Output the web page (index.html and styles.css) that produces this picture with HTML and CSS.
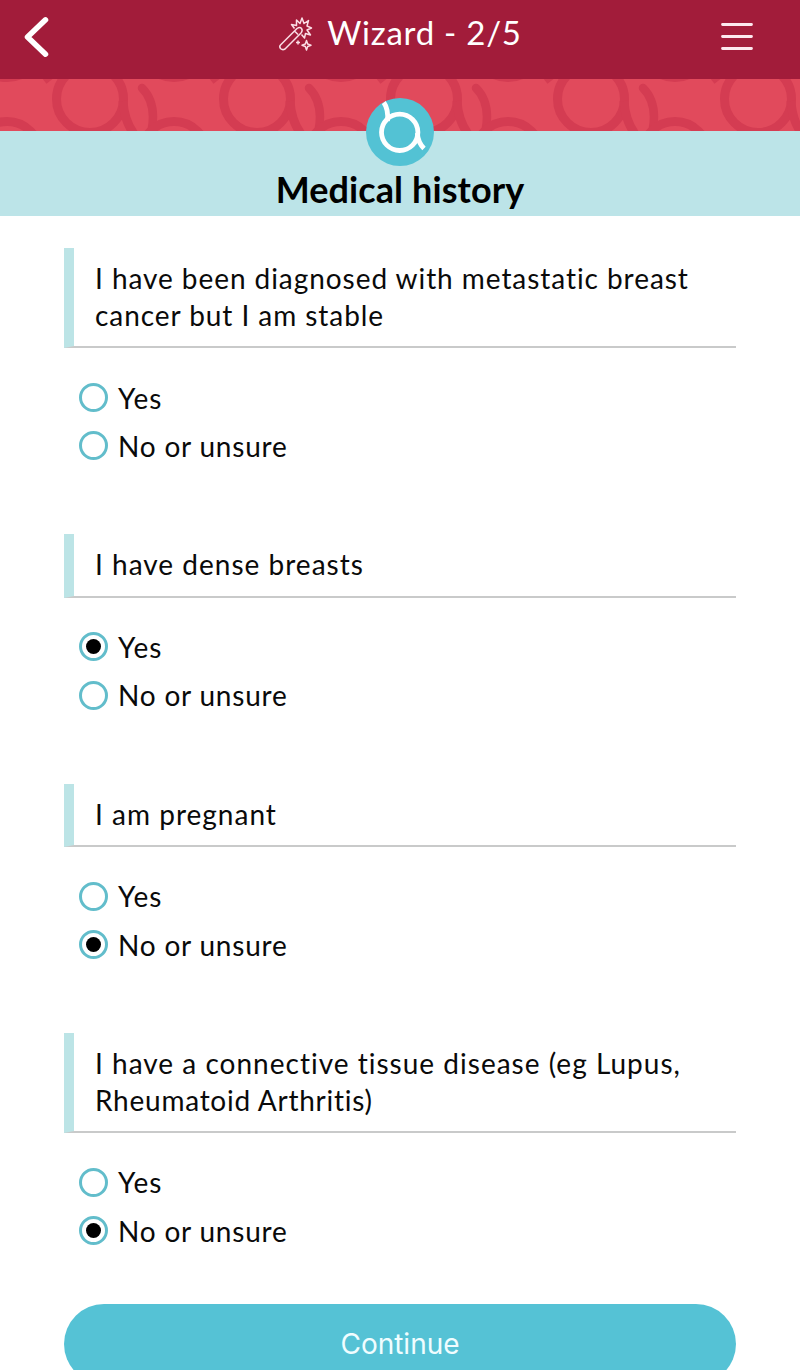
FILE: index.html
```html
<!DOCTYPE html>
<html lang="en">
<head>
<meta charset="utf-8">
<title>Wizard - Medical history</title>
<link rel="stylesheet" href="styles.css">
</head>
<body>
<header class="topbar">
  <svg class="back" width="28" height="44" viewBox="0 0 28 44"><path d="M23.500 4.800L5.500 22L23.500 39.200" fill="none" stroke="#fff" stroke-width="5.500" stroke-linecap="round" stroke-linejoin="round"/></svg>
  <div class="wizard">
    <svg class="wand" width="36" height="36" viewBox="0 0 36 36" fill="none" stroke="#fbdde5" stroke-width="1.500" stroke-linejoin="round">
      <path d="M2.500 29L19 12.500Q22 10.500 23.500 12.500Q25 14.500 23 17L7 33Q4.500 34.500 2.500 32.500Q1 30.500 2.500 29ZM16.500 15L20 18.500"/>
      <path d="M16.500 12.500L13.500 8.500L18.500 9.500L18.500 4L22 7.500L24 2L26 7.500L30.500 4.500L29 10L33.500 12L29 14L32.500 19L27.500 17.500L26.500 22L23.500 18.500"/>
      <path d="M28.500 24.500L29.700 28L33 29.300L29.700 30.500L28.500 34L27.300 30.500L24 29.300L27.300 28Z"/>
      <path d="M20 24.500v4M18 26.500h4"/>
    </svg>
    <h1 class="title">Wizard - 2/5</h1>
  </div>
  <svg class="menu" width="34" height="30" viewBox="0 0 34 30"><path d="M2.500 2.500h29M2.500 14.500h29M2.500 26.500h29" stroke="#fde8ee" stroke-width="2.800" stroke-linecap="round"/></svg>
</header>
<div class="banner">
  <svg class="pattern" width="800" height="52" viewBox="0 79 800 52">
    <defs>
      <g id="motif" fill="none" stroke="#d43c52" stroke-width="9">
        <circle cx="90" cy="99" r="33.500"/>
        <path d="M123 101Q124 120 134 134"/>
        <path d="M142 88Q157 103 151.500 131" stroke-width="8.500" stroke-linecap="round"/>
        <circle cx="174" cy="155" r="33.500"/>
        <circle cx="174" cy="44" r="33.500"/>
        <path d="M210 72L217 81"/>
      </g>
    </defs>
    <use href="#motif" x="-167"/><use href="#motif"/><use href="#motif" x="167"/><use href="#motif" x="334"/><use href="#motif" x="501"/><use href="#motif" x="668"/>
  </svg>
</div>
<section class="heading">
  <svg class="logo" width="70" height="70" viewBox="0 0 70 70">
    <circle cx="35" cy="35" r="34" fill="#53c2d4"/>
    <g fill="none" stroke="#fff" stroke-width="4.800"><circle cx="34.700" cy="35.300" r="18.200"/><path d="M18.800 5.500Q23.500 12 22.500 24"/><path d="M52.300 36Q53 45.500 59 51.500"/></g>
  </svg>
  <h2 class="subtitle">Medical history</h2>
</section>
<main class="form">
  <section class="question">
    <p class="prompt"><span class="l1">I have been diagnosed with metastatic breast</span><br><span class="l2">cancer but I am stable</span></p>
    <div class="options">
      <label class="option"><i class="radio"></i><span class="yes">Yes</span></label>
      <label class="option"><i class="radio"></i><span class="no">No or unsure</span></label>
    </div>
  </section>
  <section class="question">
    <p class="prompt"><span class="l3">I have dense breasts</span></p>
    <div class="options">
      <label class="option"><i class="radio checked"></i><span class="yes">Yes</span></label>
      <label class="option"><i class="radio"></i><span class="no">No or unsure</span></label>
    </div>
  </section>
  <section class="question">
    <p class="prompt"><span class="l4">I am pregnant</span></p>
    <div class="options">
      <label class="option"><i class="radio"></i><span class="yes">Yes</span></label>
      <label class="option"><i class="radio checked"></i><span class="no">No or unsure</span></label>
    </div>
  </section>
  <section class="question">
    <p class="prompt"><span class="l5">I have a connective tissue disease (eg Lupus,</span><br><span class="l6">Rheumatoid Arthritis)</span></p>
    <div class="options">
      <label class="option"><i class="radio"></i><span class="yes">Yes</span></label>
      <label class="option"><i class="radio checked"></i><span class="no">No or unsure</span></label>
    </div>
  </section>
  <button class="continue">Continue</button>
</main>
</body>
</html>
```
FILE: styles.css
```css
* { box-sizing: border-box; }
body { margin: 0; height: 1370px; overflow: hidden; background: #fff; color: #0a0a0a; font-family: Lato, "Noto Sans", sans-serif; }
h1, h2, p { margin: 0; }
svg { display: block; }
.topbar { height: 79px; background: #a21c3a; display: flex; justify-content: space-between; padding: 0 46px 0 22px; }
.back { margin-top: 15px; }
.wizard { display: flex; padding-left: 30px; }
.wand { margin-top: 16px; }
.title { margin: 10px 0 0 13px; font-size: 33px; line-height: 44px; font-weight: 400; color: #fff; letter-spacing: 0.75px; white-space: nowrap; }
.menu { margin-top: 22px; }
.banner { height: 52px; background: #e14a5c; }
.heading { height: 85px; background: #bce4e8; display: flex; flex-direction: column; align-items: center; }
.logo { margin-top: -34px; flex: none; }
.subtitle { font-size: 36px; line-height: 44px; font-weight: 700; color: #000; letter-spacing: 0.1px; white-space: nowrap; }
.form { padding: 32.1px 64px 0; }
.question { margin-bottom: 64.3px; }
.prompt { border-left: 10px solid #bce4e6; border-bottom: 2px solid #c9caca; padding: 12.2px 0 12.4px 21px; font-size: 28px; line-height: 36.8px; white-space: nowrap; }
.options { padding: 25.1px 0 0 15px; }
.option { height: 48.3px; display: flex; align-items: center; gap: 10px; font-size: 28px; white-space: nowrap; }
.radio { width: 29px; height: 29px; border: 3px solid #62bdcb; border-radius: 50%; display: grid; place-items: center; }
.checked::after { content: ""; width: 15px; height: 15px; border-radius: 50%; background: #000; }
.l1, .l2 { letter-spacing: 0.94px; }
.l3, .l4, .l5 { letter-spacing: 1.01px; }
.l6 { letter-spacing: 0.75px; }
.no { letter-spacing: 0.8px; }
.yes { letter-spacing: 1px; }
.continue { display: block; width: 100%; height: 80px; margin-top: -15.5px; border: 0; border-radius: 40px; background: #55c2d5; color: #f0fdff; font: 28px Inter, "Noto Sans", sans-serif; }
```
